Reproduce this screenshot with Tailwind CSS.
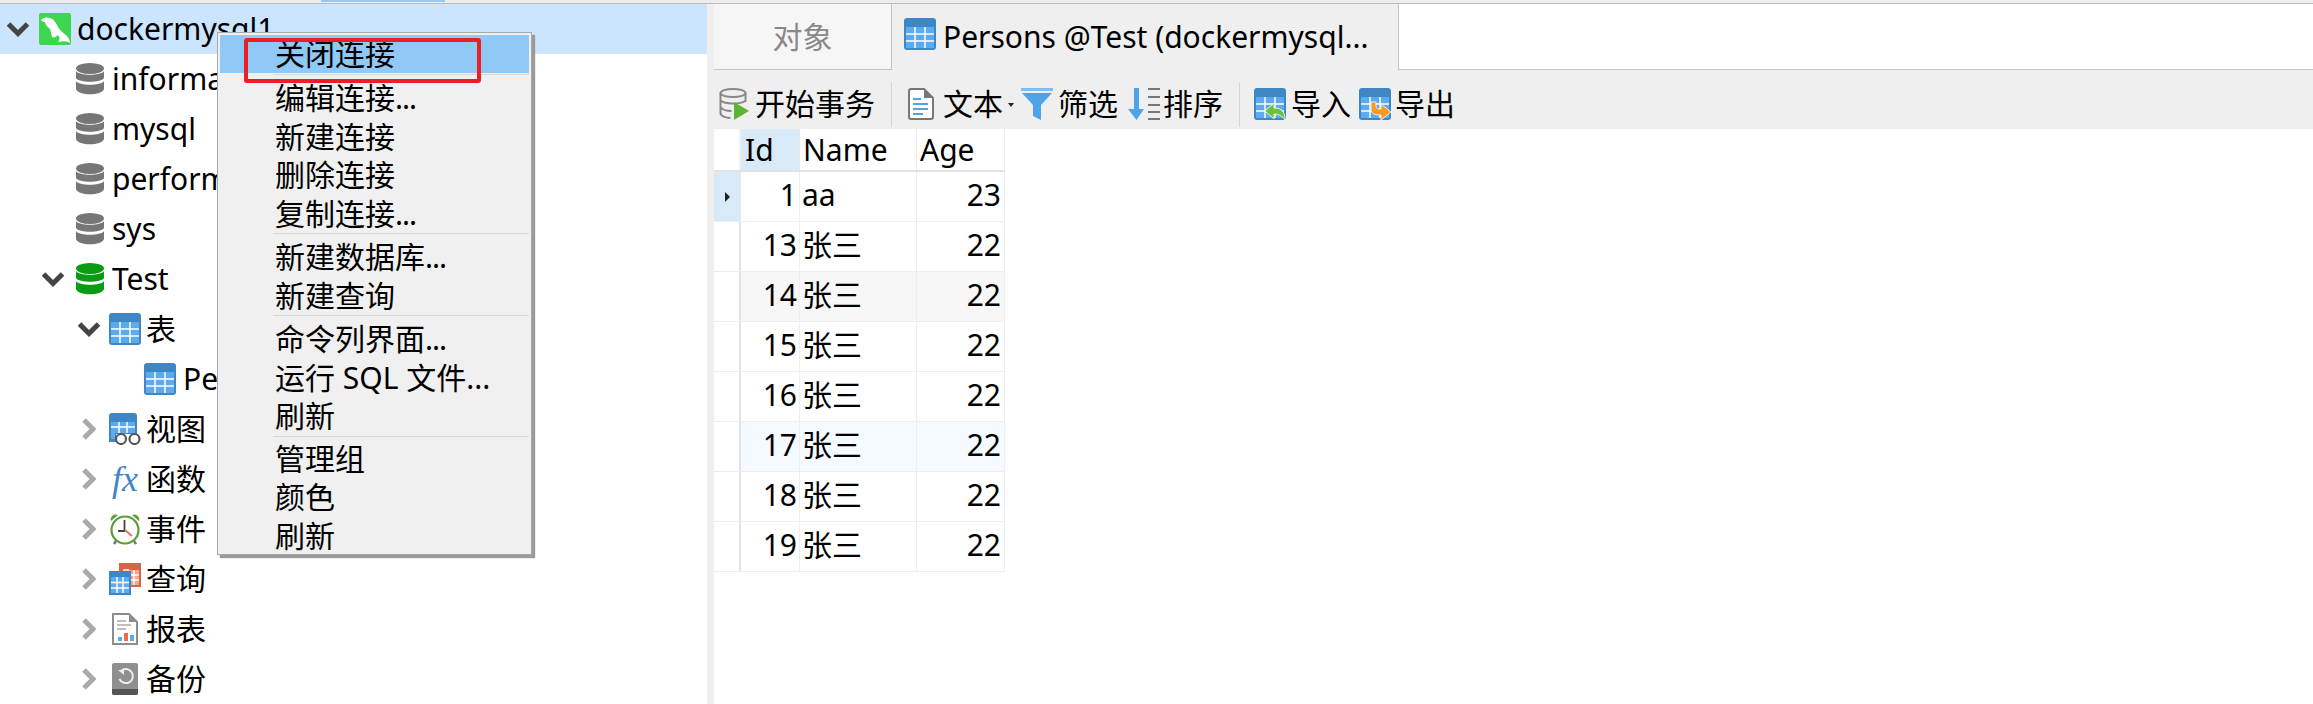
<!DOCTYPE html>
<html lang="zh-CN">
<head>
    <meta charset="UTF-8">
    <title>Navicat - Persons</title>
    <script src="https://cdn.jsdelivr.net/npm/@tailwindcss/browser@4"></script>
</head>
<body class="bg-white text-black font-['Noto_Sans','Noto_Sans_CJK_SC',sans-serif] text-[30px] leading-none overflow-hidden">
    <svg class="hidden" width="0" height="0">
        <symbol id="i-table" viewBox="0 0 32 32">
            <rect x="0" y="0" width="32" height="32" rx="3" fill="#3f86c4"/>
            <path d="M2 9h28v21H2z" fill="#5cabef"/>
            <path d="M2 16h28M2 23h28M11 9v21M21 9v21" stroke="#fff" stroke-width="1.5" fill="none"/>
        </symbol>
        <symbol id="i-db" viewBox="0 0 28 32">
            <ellipse cx="14" cy="5.5" rx="14" ry="5.5" fill="currentColor"/>
            <path d="M0 8C3 13 25 13 28 8V15C25 20 3 20 0 15Z" fill="currentColor"/>
            <path d="M0 18C3 23 25 23 28 18V26C26 33 2 33 0 26Z" fill="currentColor"/>
        </symbol>
        <symbol id="i-down" viewBox="0 0 24 16">
            <path d="M2.500 3L12 12.500L21.500 3" stroke="#444" stroke-width="5" fill="none"/>
        </symbol>
        <symbol id="i-right" viewBox="0 0 15 24">
            <path d="M3 3L12 12L3 21" stroke="#aaa" stroke-width="5" fill="none"/>
        </symbol>
    </svg>

    <!-- top strip -->
    <div class="h-[4px] bg-[#eeeeee] border-b border-[#bbbbbb] relative">
        <div class="absolute left-[321px] top-0 w-[124px] h-[2px] bg-[#9cc8f0]"></div>
    </div>

    <div class="flex h-[700px]">
        <!-- tree -->
        <div class="w-[707px] shrink-0 relative overflow-hidden">
            <div class="flex items-center h-[50px] bg-[#cce5ff] pl-[6px]">
                <svg class="w-6 h-4"><use href="#i-down"/></svg>
                <svg class="ml-[9px] w-8 h-8" viewBox="0 0 32 32">
                    <rect width="32" height="32" rx="2" fill="#3fd64f"/>
                    <path d="M2 7C4 4 8 4 11 5C15 6 17 10 19 14C21 18 25 20 28 23C30 25 31 28 31 30C28 28 24 28 19 29C21 27 21 24 19 22C17 24 15 25 13 24C12 21 12 18 11 16C8 14 6 11 6 9C4 9 3 8 2 7Z" fill="#fff"/>
                </svg>
                <span class="ml-[6px]">dockermysql1</span>
            </div>
            <div class="flex items-center h-[50px] pl-[76px] text-[#767676]"><svg class="w-7 h-8"><use href="#i-db"/></svg><span class="ml-[8px] text-black">information_schema</span></div>
            <div class="flex items-center h-[50px] pl-[76px] text-[#767676]"><svg class="w-7 h-8"><use href="#i-db"/></svg><span class="ml-[8px] text-black">mysql</span></div>
            <div class="flex items-center h-[50px] pl-[76px] text-[#767676]"><svg class="w-7 h-8"><use href="#i-db"/></svg><span class="ml-[8px] text-black">performance_schema</span></div>
            <div class="flex items-center h-[50px] pl-[76px] text-[#767676]"><svg class="w-7 h-8"><use href="#i-db"/></svg><span class="ml-[8px] text-black">sys</span></div>
            <div class="flex items-center h-[50px] pl-[41px] text-[#0a9a14]"><svg class="w-6 h-4"><use href="#i-down"/></svg><svg class="ml-[11px] w-7 h-8"><use href="#i-db"/></svg><span class="ml-[8px] text-black">Test</span></div>
            <div class="flex items-center h-[50px] pl-[77px]"><svg class="w-6 h-4"><use href="#i-down"/></svg><svg class="ml-[8px] w-8 h-8"><use href="#i-table"/></svg><span class="ml-[5px]">表</span></div>
            <div class="flex items-center h-[50px] pl-[144px]"><svg class="w-8 h-8"><use href="#i-table"/></svg><span class="ml-[7px]">Persons</span></div>

            <div class="flex items-center h-[50px] pl-[81px]">
                <svg class="w-[15px] h-6"><use href="#i-right"/></svg>
                <svg class="ml-[13px] w-8 h-8" viewBox="0 0 32 32">
                    <path d="M0 3a3 3 0 0 1 3-3h22a3 3 0 0 1 3 3v18H7v8H0Z" fill="#3f86c4"/>
                    <path d="M2 9h24v11H2zM2 20h4v6H2z" fill="#5cabef"/>
                    <path d="M2 14h24M10 9v11M18 9v11" stroke="#fff" stroke-width="1.5"/>
                    <circle cx="12" cy="26" r="5" fill="#fff" stroke="#555" stroke-width="2.2"/>
                    <circle cx="25.500" cy="26" r="5" fill="#fff" stroke="#555" stroke-width="2.2"/>
                </svg>
                <span class="ml-[5px]">视图</span>
            </div>
            <div class="flex items-center h-[50px] pl-[81px]">
                <svg class="w-[15px] h-6"><use href="#i-right"/></svg>
                <span class="ml-[16px] w-[30px] font-['Liberation_Serif',serif] italic text-[36px] text-[#3f86c4]">fx</span>
                <span class="ml-[4px]">函数</span>
            </div>
            <div class="flex items-center h-[50px] pl-[81px]">
                <svg class="w-[15px] h-6"><use href="#i-right"/></svg>
                <svg class="ml-[13px] w-8 h-8" viewBox="0 0 32 32">
                    <path d="M2 8A5 5 0 0 1 9 2ZM23 2A5 5 0 0 1 30 8Z" fill="#5a9e3a"/>
                    <path d="M5 31l2-3M27 31l-2-3" stroke="#777" stroke-width="2.500"/>
                    <circle cx="16" cy="17" r="13.500" fill="#fff" stroke="#5a9e3a" stroke-width="2.200"/>
                    <path d="M15.500 7v11H9" stroke="#444" stroke-width="1.800" fill="none"/>
                    <path d="M16 17l7 6" stroke="#f0705a" stroke-width="2"/>
                </svg>
                <span class="ml-[5px]">事件</span>
            </div>
            <div class="flex items-center h-[50px] pl-[81px]">
                <svg class="w-[15px] h-6"><use href="#i-right"/></svg>
                <svg class="ml-[13px] w-8 h-8" viewBox="0 0 32 32">
                    <rect x="10" y="0" width="22" height="24" fill="#db6245"/>
                    <path d="M20 7h10v15H20z" fill="#f4a58e"/>
                    <path d="M20 12h10M20 17h10M25 7v15M14 7h6" stroke="#fff" stroke-width="1.400"/>
                    <rect x="0" y="8" width="22" height="24" fill="#3f86c4"/>
                    <path d="M2 14h18v16H2z" fill="#5cabef"/>
                    <path d="M2 19.500h18M2 25h18M8 14v16M14 14v16" stroke="#fff" stroke-width="1.400"/>
                </svg>
                <span class="ml-[5px]">查询</span>
            </div>
            <div class="flex items-center h-[50px] pl-[81px]">
                <svg class="w-[15px] h-6"><use href="#i-right"/></svg>
                <svg class="ml-[16px] w-[26px] h-8" viewBox="0 0 26 32">
                    <path d="M1 1h16l8 8v22H1Z" fill="#fff" stroke="#8c8c8c" stroke-width="2"/>
                    <path d="M17 1v8h8Z" fill="#8c8c8c"/>
                    <path d="M5 8h9M5 12h14M5 16h9" stroke="#aaa" stroke-width="1.600"/>
                    <path d="M6 24h4v4H6z" fill="#5cabef"/><path d="M12 20h4v8h-4z" fill="#ec6b4a"/><path d="M18 22h4v6h-4z" fill="#5cabef"/>
                </svg>
                <span class="ml-[8px]">报表</span>
            </div>
            <div class="flex items-center h-[50px] pl-[81px]">
                <svg class="w-[15px] h-6"><use href="#i-right"/></svg>
                <svg class="ml-[16px] w-[26px] h-8" viewBox="0 0 26 32">
                    <rect width="26" height="32" rx="2" fill="#8f8f8f"/>
                    <path d="M0 26h26v4a2 2 0 0 1-2 2H2a2 2 0 0 1-2-2Z" fill="#555"/>
                    <path d="M9 8a7 7 0 1 1-1.500 8" stroke="#eee" stroke-width="2" fill="none"/>
                    <path d="M6 7h6v5Z" fill="#eee"/>
                </svg>
                <span class="ml-[8px]">备份</span>
            </div>
        </div>

        <div class="w-[7px] shrink-0 bg-[#efefef]"></div>

        <!-- right pane -->
        <div class="flex-1 min-w-0">
            <div class="flex h-[66px]">
                <div class="w-[178px] h-full bg-[#f6f6f6] border-r border-b border-[#c4c4c4] flex items-center justify-center text-[#888888]">对象</div>
                <div class="w-[507px] h-full bg-[#efefef] border-r border-[#c4c4c4] flex items-center pl-[12px]">
                    <svg class="w-8 h-8 mb-[6px]"><use href="#i-table"/></svg>
                    <span class="ml-[7px] whitespace-nowrap">Persons @Test (dockermysql...</span>
                </div>
                <div class="flex-1 border-b border-[#c4c4c4]"></div>
            </div>

            <div class="flex items-center h-[59px] bg-[#efefef] pl-[5px] pt-[9px] whitespace-nowrap">
                <svg class="w-[30px] h-8" viewBox="0 0 30 32">
                    <ellipse cx="14" cy="5" rx="12.500" ry="4" fill="none" stroke="#888" stroke-width="2"/>
                    <path d="M1.500 5v20c0 3 5 5 10 5M26.500 5v9M1.500 12c2 4 18 5 25 1M1.500 19c2 3 7 4 11 4" fill="none" stroke="#888" stroke-width="2"/>
                    <path d="M15 14l15 9-15 9Z" fill="#5cb531"/>
                </svg>
                <span class="ml-[6px]">开始事务</span>
                <div class="ml-[16px] w-px h-[45px] bg-[#d4d4d4]"></div>
                <svg class="ml-[16px] w-[26px] h-8" viewBox="0 0 26 32">
                    <path d="M1 3a2 2 0 0 1 2-2h13l9 9v19a2 2 0 0 1-2 2H3a2 2 0 0 1-2-2Z" fill="#fff" stroke="#777" stroke-width="2"/>
                    <path d="M16 1v9h9Z" fill="#777"/>
                    <path d="M5 11h8M5 16h15M5 21h15M5 26h10" stroke="#4fa3ea" stroke-width="2.200"/>
                </svg>
                <span class="ml-[9px]">文本</span>
                <svg class="ml-[5px] mt-[2px] w-[6px] h-[4px]" viewBox="0 0 6 4"><path d="M0 0h6L3 4Z" fill="#222"/></svg>
                <svg class="ml-[7px] w-8 h-8" viewBox="0 0 32 32">
                    <path d="M0 0h32v3H0Z" fill="#7fbdf0"/>
                    <path d="M1 5h30L20 17v15l-8-4V17Z" fill="#4fa3ea"/>
                </svg>
                <span class="ml-[5px]">筛选</span>
                <svg class="ml-[10px] w-8 h-8" viewBox="0 0 32 32">
                    <path d="M6 0h5v21h5L8.500 32 0 21h6Z" fill="#4fa3ea"/>
                    <path d="M20 1h12M20 9h12M20 17h12M20 24h12M20 31h12" stroke="#777" stroke-width="2"/>
                </svg>
                <span class="ml-[3px]">排序</span>
                <div class="ml-[16px] w-px h-[45px] bg-[#d4d4d4]"></div>
                <svg class="ml-[14px] w-8 h-8" viewBox="0 0 32 32">
                    <use href="#i-table"/>
                    <path d="M31 32c0-8-3-12-11-12v-5l-9 8 9 8v-5c5 0 8 2 11 6Z" fill="#6cc23a" stroke="#efefef" stroke-width="1"/>
                </svg>
                <span class="ml-[5px]">导入</span>
                <svg class="ml-[8px] w-8 h-8" viewBox="0 0 32 32">
                    <use href="#i-table"/>
                    <path d="M12 14v7c0 5 4 6 10 6v5l10-8-10-8v5c-3 0-5 0-5-3v-4Z" fill="#f79a1e" stroke="#efefef" stroke-width="1"/>
                </svg>
                <span class="ml-[4px]">导出</span>
            </div>

            <!-- data grid -->
            <div id="grid" class="w-[291px]">
                <div class="flex h-[43px] border-b-2 border-[#e2e2e2]">
                    <div class="w-[27px] border-r-2 border-[#f0f0f0]"></div>
                    <div class="w-[59px] bg-[#d8e9f8] border-r border-[#e8e8e8] flex items-center pl-[4px]">Id</div>
                    <div class="w-[117px] border-r border-[#eeeeee] flex items-center pl-[3px]">Name</div>
                    <div class="w-[88px] border-r border-[#eeeeee] flex items-center pl-[3px]">Age</div>
                </div>
                <div class="flex h-[50px] border-b border-[#eeeeee]">
                    <div class="w-[27px] bg-[#d8e9f8] flex items-center justify-center"><svg class="w-[5px] h-[10px]" viewBox="0 0 5 10"><path d="M0 0l5 5-5 5Z" fill="#222"/></svg></div>
                    <div class="w-[59px] border-r border-[#eeeeee] flex items-center justify-end pr-[2px] pb-[3px]">1</div>
                    <div class="w-[117px] border-r border-[#eeeeee] flex items-center pl-[2px] pb-[3px]">aa</div>
                    <div class="w-[88px] border-r border-[#eeeeee] flex items-center justify-end pr-[3px] pb-[3px]">23</div>
                </div>
            </div>
        </div>
    </div>

    <!-- context menu -->
    <div class="absolute left-[217px] top-[32px] w-[315px] h-[523px] bg-[#f0f0f0] border border-[#a8a8a8] shadow-[3px_3px_1px_#999999] p-[2px]">
        <div class="h-[38px] bg-[#90c8f6] flex items-center pl-[55px]">关闭连接</div>
        <div class="h-[6px] ml-[53px] pt-[1px]"><div class="h-px bg-[#d8d8d8]"></div></div>
        <div class="h-[38.500px] flex items-center pl-[55px]"><span>编辑连接<span class="tracking-[-1px]">...</span></span></div>
        <div class="h-[38.500px] flex items-center pl-[55px]">新建连接</div>
        <div class="h-[38.500px] flex items-center pl-[55px]">删除连接</div>
        <div class="h-[38.500px] flex items-center pl-[55px]"><span>复制连接<span class="tracking-[-1px]">...</span></span></div>
        <div class="h-[5px] ml-[53px]"><div class="h-px bg-[#d8d8d8]"></div></div>
        <div class="h-[38.500px] flex items-center pl-[55px]"><span>新建数据库<span class="tracking-[-1px]">...</span></span></div>
        <div class="h-[38.500px] flex items-center pl-[55px]">新建查询</div>
        <div class="h-[5px] ml-[53px]"><div class="h-px bg-[#d8d8d8]"></div></div>
        <div class="h-[38.500px] flex items-center pl-[55px]"><span>命令列界面<span class="tracking-[-1px]">...</span></span></div>
        <div class="h-[38.500px] flex items-center pl-[55px]">运行 SQL 文件...</div>
        <div class="h-[38.500px] flex items-center pl-[55px]">刷新</div>
        <div class="h-[4px] ml-[53px]"><div class="h-px bg-[#d8d8d8]"></div></div>
        <div class="h-[38.500px] flex items-center pl-[55px]">管理组</div>
        <div class="h-[38.500px] flex items-center pl-[55px]">颜色</div>
        <div class="h-[38.500px] flex items-center pl-[55px]">刷新</div>
    </div>
    <!-- red annotation box -->
    <div class="absolute left-[244px] top-[38px] w-[237px] h-[45px] border-[4px] border-[#ee1c25] rounded-[3px]"></div>

    <script>
        // ids 13-19, two of the rows are tinted in the reference
        const rows = [
            { id: 13, cell: '' },
            { id: 14, cell: 'bg-[#f7f7f7]' },
            { id: 15, cell: '' },
            { id: 16, cell: '' },
            { id: 17, cell: 'bg-[#f4faff]' },
            { id: 18, cell: '' },
            { id: 19, cell: '' },
        ];
        document.getElementById('grid').insertAdjacentHTML('beforeend', rows.map(r => `
            <div class="flex h-[50px] border-b border-[#eeeeee]">
                <div class="w-[27px] border-r-2 border-[#e2e2e2]"></div>
                <div class="w-[59px] ${r.cell} border-r border-[#eeeeee] flex items-center justify-end pr-[2px] pb-[3px]">${r.id}</div>
                <div class="w-[117px] ${r.cell} border-r border-[#eeeeee] flex items-center pl-[2px] pb-[3px]">张三</div>
                <div class="w-[88px] ${r.cell} border-r border-[#eeeeee] flex items-center justify-end pr-[3px] pb-[3px]">22</div>
            </div>`).join(''));
    </script>
</body>
</html>
